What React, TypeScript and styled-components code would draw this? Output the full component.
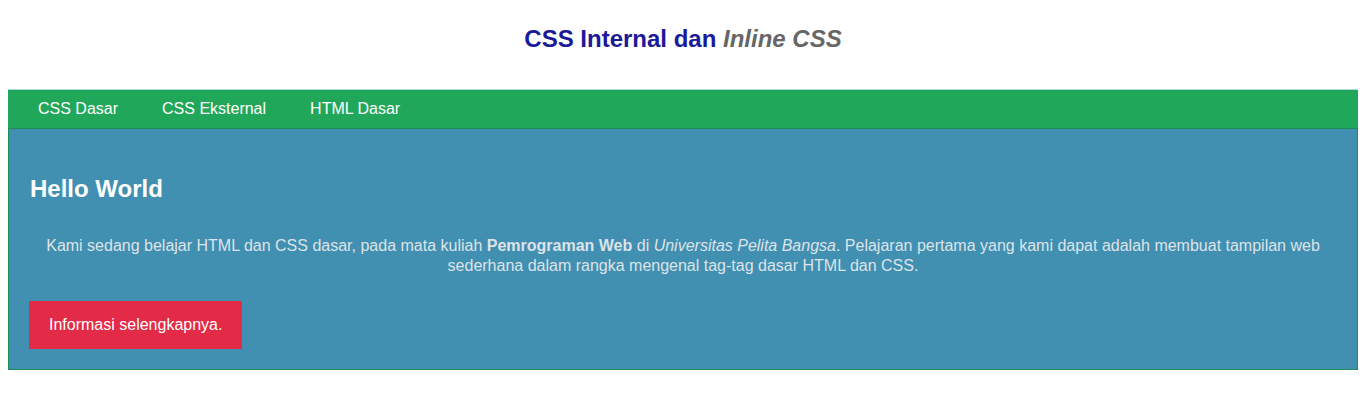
import React from "react";
import styled, { createGlobalStyle } from "styled-components";

const Global = createGlobalStyle`
  html, body { margin: 0; padding: 0; background: #ffffff; }
  body { font-family: "Liberation Sans", Arial, sans-serif; }
`;

const Page = styled.div`
  width: 1350px;
  margin-left: 8px;
`;

const Header = styled.header`
  padding: 25px 0 36px;
  display: flex;
  justify-content: center;
`;

const Title = styled.h1`
  margin: 0;
  font-size: 24px;
  line-height: 28px;
  font-weight: bold;
  color: #1a1a9a;
`;

const Accent = styled.em`
  color: #666666;
  font-style: italic;
`;

const Nav = styled.nav`
  display: flex;
  padding-left: 8px;
  background: #21a75a;
  border-top: 1px solid #a9d8e6;
`;

const NavLink = styled.a`
  display: block;
  padding: 0 22px;
  line-height: 38px;
  font-size: 16px;
  color: #ffffff;
  text-decoration: none;
`;

const Content = styled.section`
  background: #418fb1;
  border: 1px solid #1f8d55;
  padding: 46px 20px 20px;
`;

const Heading = styled.h2`
  margin: 0 0 33px 1px;
  font-size: 24px;
  line-height: 28px;
  font-weight: bold;
  color: #ffffff;
`;

const Text = styled.p`
  margin: 0 0 25px;
  text-align: center;
  font-size: 16px;
  line-height: 20px;
  color: #dde3e8;
`;

const Button = styled.button`
  display: block;
  border: none;
  background: #e32a46;
  color: #ffffff;
  font-family: "Liberation Sans", Arial, sans-serif;
  font-size: 16px;
  line-height: 20px;
  padding: 14px 20px;
  white-space: nowrap;
  cursor: pointer;
`;

export default function App() {
  return (
    <>
      <Global />
      <Page>
        <Header>
          <Title>
            CSS Internal dan <Accent>Inline CSS</Accent>
          </Title>
        </Header>
        <Nav>
          <NavLink href="#">CSS Dasar</NavLink>
          <NavLink href="#">CSS Eksternal</NavLink>
          <NavLink href="#">HTML Dasar</NavLink>
        </Nav>
        <Content>
          <Heading>Hello World</Heading>
          <Text>
            Kami sedang belajar HTML dan CSS dasar, pada mata kuliah <b>Pemrograman Web</b> di{" "}
            <i>Universitas Pelita Bangsa</i>. Pelajaran pertama yang kami dapat adalah membuat tampilan web
            sederhana dalam rangka mengenal tag-tag dasar HTML dan CSS.
          </Text>
          <Button>Informasi selengkapnya.</Button>
        </Content>
      </Page>
    </>
  );
}
